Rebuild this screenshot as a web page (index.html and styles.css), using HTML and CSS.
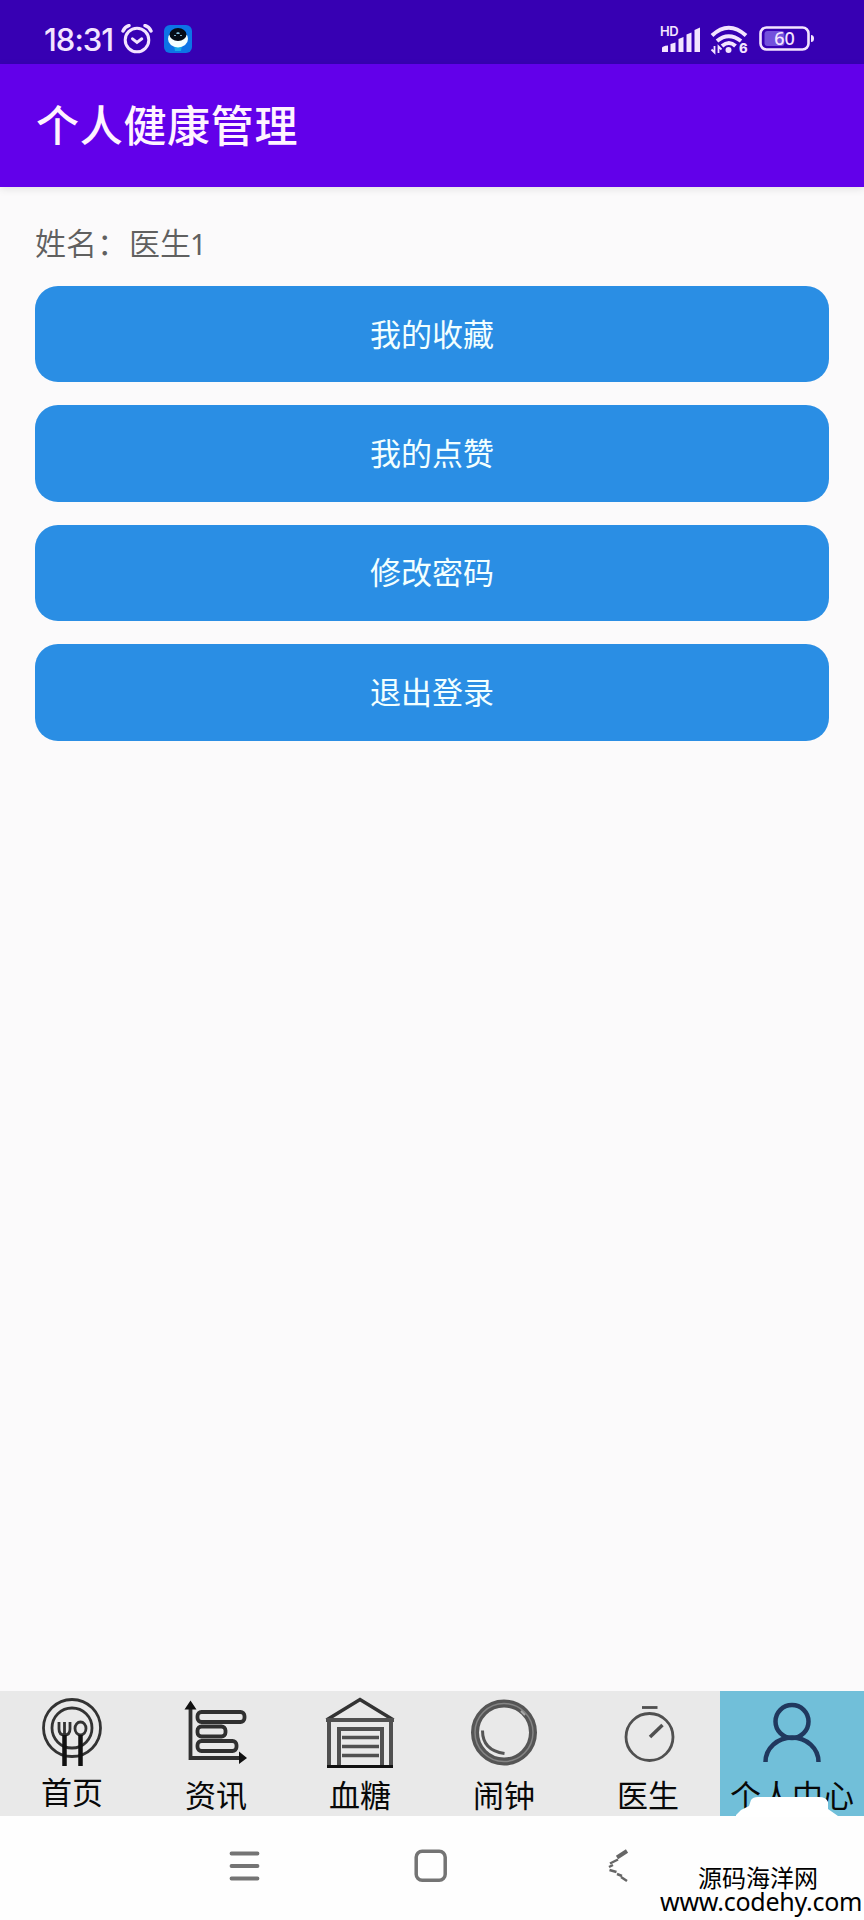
FILE: index.html
```html
<!DOCTYPE html>
<html lang="zh-CN">
<head>
<meta charset="utf-8">
<title>个人健康管理</title>
<link rel="stylesheet" href="styles.css">
</head>
<body>
<div class="screen">
  <header class="status">
    <span class="clock">18:31</span>
    <svg class="alarm" width="32" height="30" viewBox="0 0 32 30" fill="none" stroke="#f3e4ff" stroke-width="3" stroke-linecap="round">
      <circle cx="16" cy="16" r="11.8"/><path d="M11.500 14.800l4.500 3.600 4.800-3.600"/><path d="M2 7q2-4.500 6-5.500M30 7q-2-4.500-6-5.500" stroke-width="3.400"/>
    </svg>
    <svg class="bot" width="28" height="28" viewBox="0 0 28 28">
      <rect width="28" height="28" rx="6" fill="#0d74e6"/><path d="M10 20h8l-1 6h-6z" fill="#18a9e8"/><ellipse cx="14" cy="14" rx="10" ry="8.500" fill="#f4ffff"/><ellipse cx="14" cy="9.500" rx="8.500" ry="6.500" fill="#050b16"/><path d="M11 11v-1M17 11v-1M12.500 8.500q1.500-1 3 0" stroke="#9adfff" stroke-width="1.500" fill="none"/>
    </svg>
    <svg class="signal" width="42" height="30" viewBox="0 0 42 30" fill="#f3e4ff">
      <text class="hd" x="0" y="13">HD</text>
      <path d="M2 25q0-2 6-2.500V29H2zM10.500 21l5-1.500V29h-5zM18.500 16l5-2v15h-5zM26.500 11.500l5-2V29h-5zM34.500 7l5.500-2.500V29h-5.500z"/>
    </svg>
    <svg class="wifi" width="38" height="30" viewBox="0 0 38 30" fill="none" stroke="#f3e4ff" stroke-width="4">
      <path d="M2 11.500Q18.500-4 36 11.500M7 17q11.500-9.500 24 0M12 22q7-6 13.500 0"/><circle cx="18.500" cy="26" r="3" fill="#f3e4ff" stroke="none"/>
      <path d="M4.500 22v6.500l-3-3M8.500 29v-6.500l3 3" stroke-width="1.800"/><text class="six" x="29" y="29">6</text>
    </svg>
    <svg class="battery" width="56" height="26" viewBox="0 0 56 26">
      <rect x="1.500" y="1.500" width="48" height="22" rx="6" fill="none" stroke="#f3e4ff" stroke-width="2.600"/><rect x="5.500" y="5" width="20" height="15" rx="3" fill="#7350dc"/><path d="M52 9q3 0 3 3.500T52 16z" fill="#f3e4ff"/><text class="level" x="25.500" y="19" text-anchor="middle">60</text>
    </svg>
  </header>
  <div class="appbar"><h1>个人健康管理</h1></div>
  <main class="content">
    <p class="name">姓名：<span>医生</span><span class="digit">1</span></p>
    <button class="action">我的收藏</button>
    <button class="action">我的点赞</button>
    <button class="action">修改密码</button>
    <button class="action">退出登录</button>
  </main>
  <nav class="tabs">
    <a class="tab tab-home">
      <svg width="72" height="72" viewBox="0 0 72 72" fill="none" stroke="#333" stroke-width="2.800">
        <circle cx="36" cy="33" r="28.500"/><circle cx="36" cy="33" r="20"/>
        <path d="M27.500 43h4M43.500 43h4" stroke="#e9e9e9" stroke-width="7"/>
        <path d="M23 27v7q0 6 5.500 6t5.500-6v-7M28.500 27v14"/><ellipse cx="44.500" cy="33.500" rx="5.500" ry="6.500"/>
        <path d="M28.500 40v31M44.500 40v31" stroke="#111" stroke-width="4.500"/>
      </svg><span>首页</span>
    </a>
    <a class="tab">
      <svg width="72" height="72" viewBox="0 0 72 72" fill="none" stroke="#303030" stroke-width="3.800">
        <path d="M10.500 12v50h50"/><path d="M4.500 13.500l6-9 6 9zM59 55.500l8 6.500-8 6z" fill="#111" stroke="none"/>
        <rect x="17.500" y="16" width="47" height="10" rx="4"/><rect x="17.500" y="30.500" width="28" height="10" rx="4"/><rect x="17.500" y="45" width="39" height="10" rx="4"/>
      </svg><span>资讯</span>
    </a>
    <a class="tab">
      <svg width="72" height="72" viewBox="0 0 72 72" fill="none" stroke="#505050" stroke-width="4">
        <path d="M2.500 24L36 3.500 69.500 24" stroke="#333" stroke-width="3.500"/><path d="M2 24h68M5 24v46M67 24v46M15 70V33h43v37"/><path d="M18 41.500h37M18 50.500h37M18 59.500h37" stroke-width="3.500"/><path d="M3 70.500h66" stroke="#111" stroke-width="3"/>
      </svg><span>血糖</span>
    </a>
    <a class="tab">
      <svg width="72" height="72" viewBox="0 0 72 72" fill="none" stroke="#555">
        <circle cx="36" cy="36.500" r="29" stroke-width="8"/><circle cx="36" cy="36.500" r="29" stroke="#858585" stroke-width="1.500"/><path d="M14.500 34.500q0 20 22 23" stroke-width="3"/><path d="M53 15l4 4" stroke="#aaa" stroke-width="2"/>
      </svg><span>闹钟</span>
    </a>
    <a class="tab">
      <svg width="72" height="72" viewBox="0 0 72 72" fill="none" stroke="#505050" stroke-width="2.800">
        <circle cx="37.500" cy="41" r="23.500"/><path d="M30 11.500h15.500"/><path d="M38 41l12.500-12" stroke-width="3.500"/>
      </svg><span>医生</span>
    </a>
    <a class="tab active">
      <svg width="72" height="72" viewBox="0 0 72 72" fill="none" stroke="#20385e" stroke-width="4.500">
        <circle cx="36" cy="25.500" r="16.500"/><path d="M9.500 66a26.500 24.500 0 0 1 53 0"/>
      </svg><span>个人中心</span>
    </a>
  </nav>
  <footer class="sysnav">
    <svg width="32" height="32" viewBox="0 0 32 32" stroke="#747474" stroke-width="3.800" stroke-linecap="round"><path d="M2.500 3.500h26M2.500 16h26M2.500 28.500h26"/></svg>
    <svg width="34" height="34" viewBox="0 0 34 34" fill="none" stroke="#747474" stroke-width="3.500"><rect x="2.200" y="2.200" width="29" height="29" rx="6"/></svg>
    <svg class="back" width="24" height="34" viewBox="0 0 24 34" fill="none" stroke="#666"><path d="M10 8.500L20 2" stroke-width="4"/><path d="M3 14.500l8-4M2 18l4-2M2.500 21l7 2M10 25l5 2M14 28l6 4" stroke-width="2.500"/></svg>
  </footer>
  <div class="watermark">
    <svg class="cloud" width="102" height="22" viewBox="0 0 102 22"><path d="M0 22v-2l5-5 8-4 2-6q2-3 7-3h61q7 0 9 5v7l10 7v1z" fill="#fff"/></svg>
    <div class="site">源码海洋网</div>
    <div class="url">www.codehy.com</div>
  </div>
</div>
</body>
</html>
```
FILE: styles.css
```css
* { box-sizing: border-box; }
body { margin: 0; background: #fafafa; font-family: "Noto Sans CJK SC", sans-serif; }
.screen { position: relative; width: 864px; height: 1920px; display: flex; flex-direction: column; overflow: hidden; background: #fbfafb; }
.status { height: 64px; flex: none; display: flex; align-items: flex-start; padding: 24px 49px 0 44px; background: #3700b3; }
.clock { width: 70px; font: 500 31px/32px Inter, sans-serif; letter-spacing: -1px; color: #f3e4ff; white-space: nowrap; }
.alarm { margin-left: 7px; }
.bot { margin: 1px auto 0 11px; }
.hd { font: 600 13px Inter, sans-serif; letter-spacing: -.5px; }
.signal { margin-top: -1px; overflow: visible; }
.wifi { margin-left: 8px; overflow: visible; }
.six { font: 800 13px Inter, sans-serif; fill: #f3e4ff; stroke: none; }
.battery { margin: 2px 0 0 11px; }
.level { font: 500 18px "Noto Sans", sans-serif; fill: #f3e4ff; }
.appbar { height: 123px; flex: none; display: flex; align-items: center; padding: 0 0 5px 36px; background: #6200ea; box-shadow: 0 2px 8px rgba(0, 0, 0, .1); z-index: 1; }
h1 { margin: 0; font-size: 43px; line-height: 60px; font-weight: 500; letter-spacing: .7px; color: #fff3ff; }
.content { flex: 1; display: flex; flex-direction: column; gap: 22.800px; padding: 33px 35px 0; }
.name { margin: 0; height: 43px; font-size: 31px; line-height: 43px; font-weight: 350; color: #606060; }
.name span { margin-left: 1px; }
.name .digit { margin-left: -1px; font: 400 29px "Noto Sans", sans-serif; }
.action { width: 100%; height: 96.600px; padding: 0 0 3px; border: 0; border-radius: 23px; background: #2a8ee4; color: #f2ffff; font: 400 31px/44px "Noto Sans CJK SC", sans-serif; }
.tabs { height: 125px; flex: none; display: grid; grid-template-columns: repeat(6, 1fr); background: #e9e9e9; }
.tab { display: flex; flex-direction: column; align-items: center; padding-top: 5px; font-size: 31px; line-height: 44px; color: #080808; white-space: nowrap; }
.tab span { margin-top: 4px; }
.tab-home { padding-top: 4px; }
.tab-home span { margin-top: 2px; }
.tab svg { flex: none; }
.active { background: #71bfd9; }
.sysnav { height: 104px; flex: none; display: flex; align-items: center; padding: 0 0 5px 229px; gap: 153px; background: #fefefe; }
.back { margin-left: 6px; }
.watermark { position: absolute; right: 0; bottom: 0; width: 206px; height: 125px; color: #000; white-space: nowrap; }
.cloud { display: block; margin: 0 0 0 78px; }
.site { margin: 48px 0 0 40px; font-size: 24px; line-height: 24px; }
.url { margin: -1px 0 0 2px; font: 400 25px/26px "Noto Sans", sans-serif; letter-spacing: -.25px; }
```
